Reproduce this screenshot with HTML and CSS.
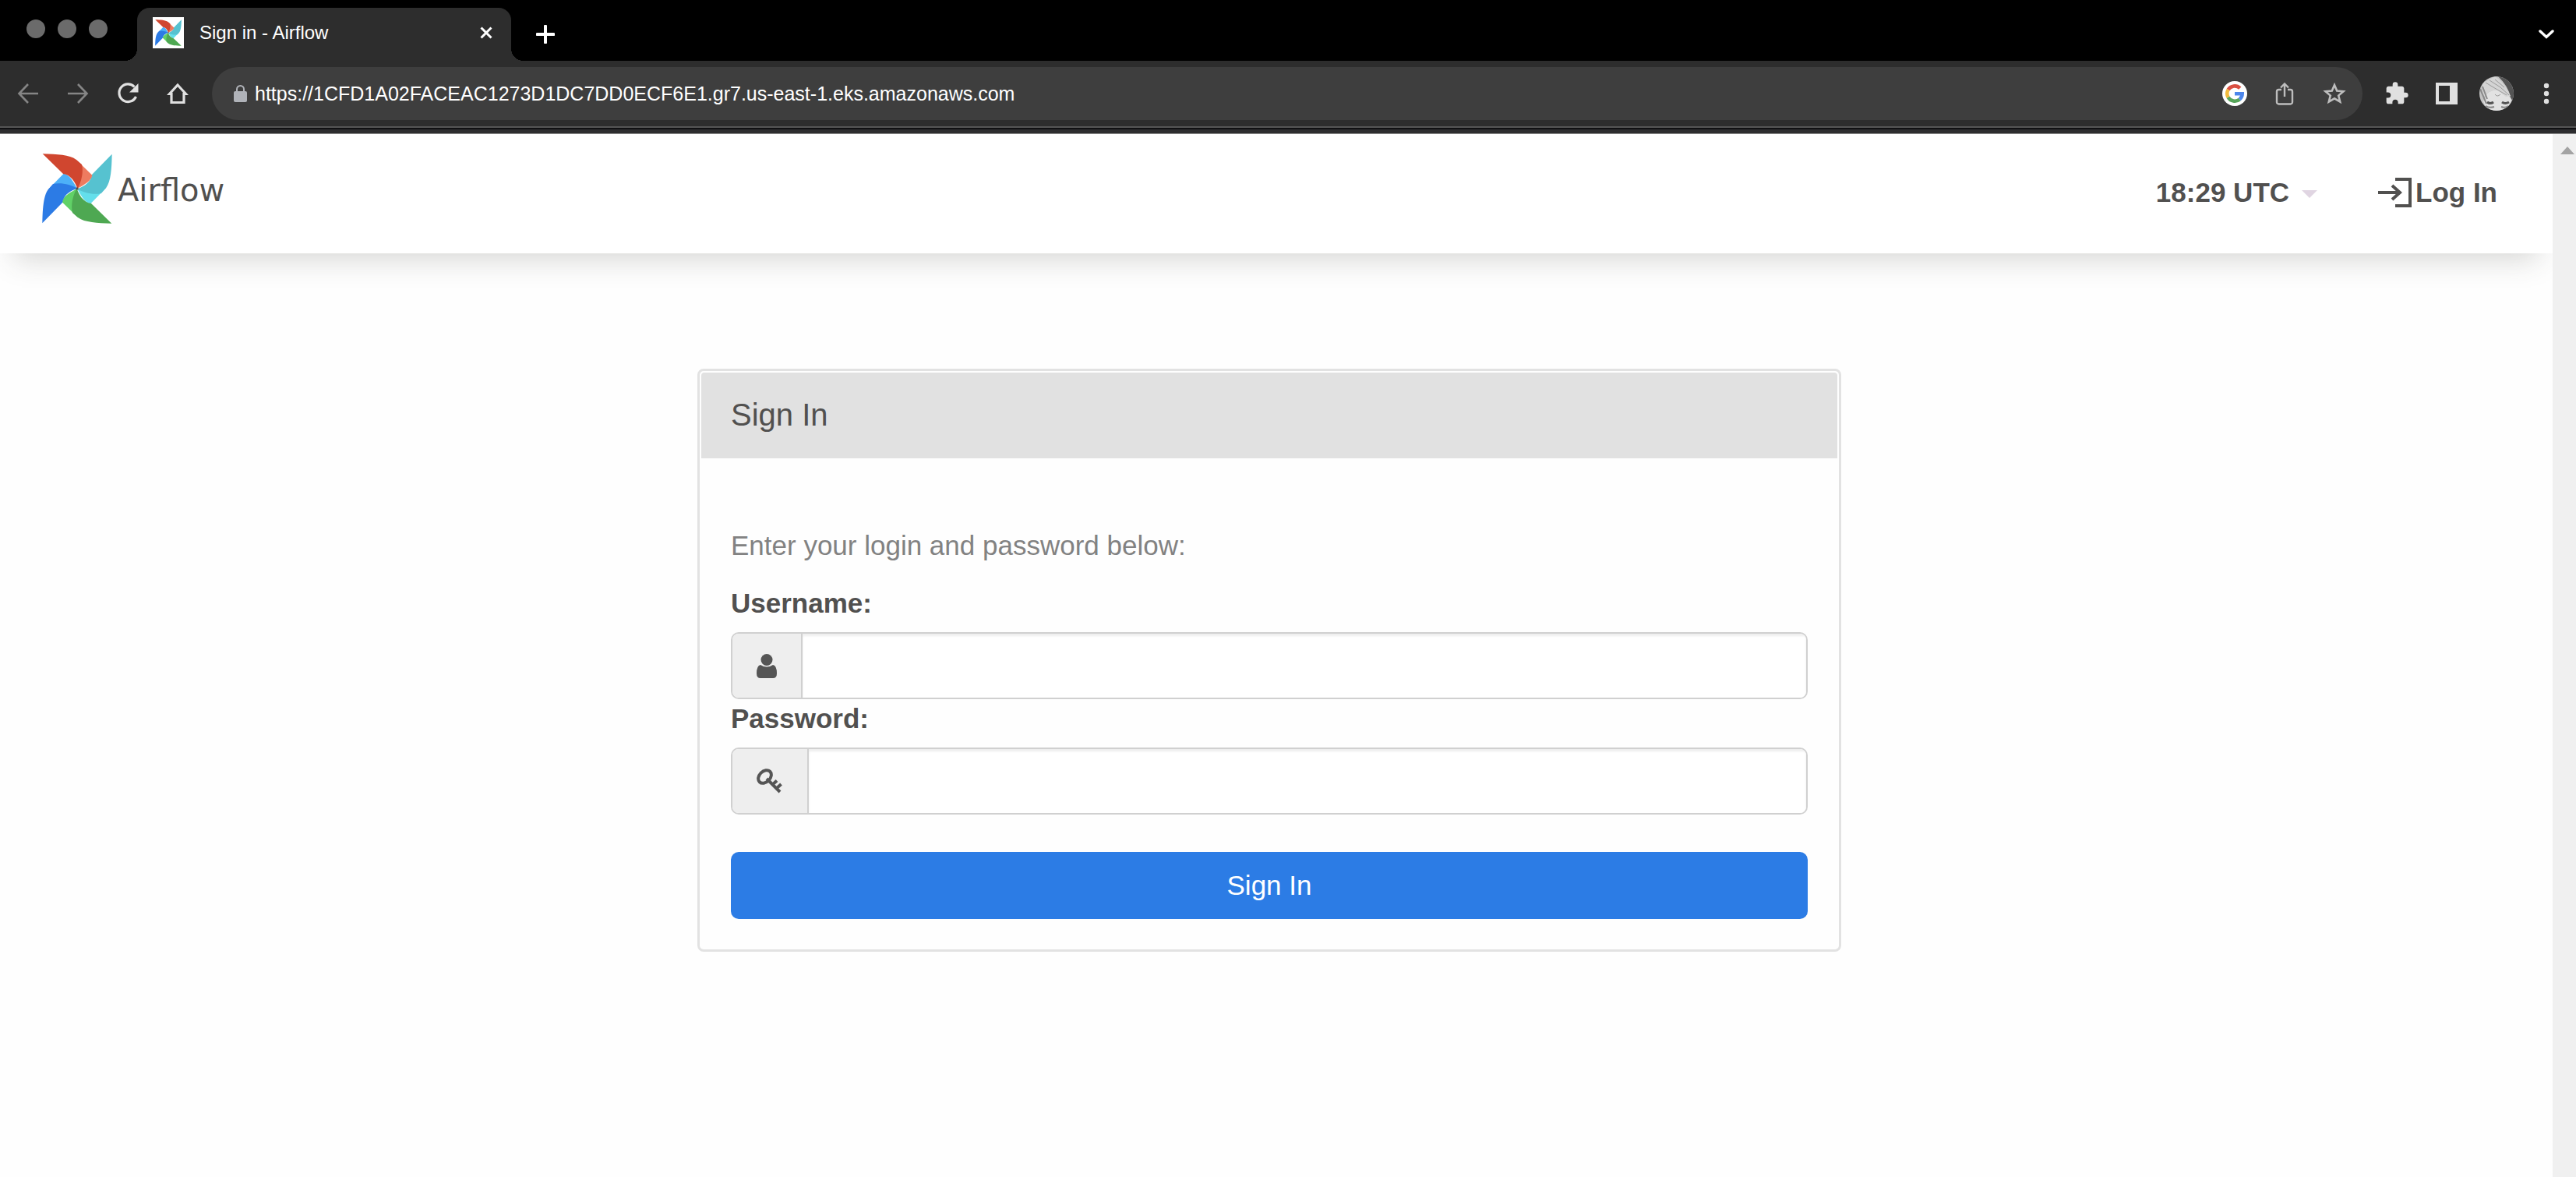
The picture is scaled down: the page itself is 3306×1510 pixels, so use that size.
FILE: index.html
```html
<!DOCTYPE html>
<html lang="en">
<head>
<meta charset="utf-8">
<title>Sign in - Airflow</title>
<link rel="stylesheet" href="styles.css">
</head>
<body>
<div class="browser">
  <div class="tabstrip">
    <div class="lights"><span class="light"></span><span class="light"></span><span class="light"></span></div>
    <div class="tab">
      <span class="favicon">
        <svg width="34" height="34" viewBox="162 110 270 270" aria-hidden="true"><use href="#pinwheel"/></svg>
      </span>
      <span class="tab-title">Sign in - Airflow</span>
      <button class="icon-btn tab-close" type="button" aria-label="Close tab">
        <svg width="16" height="16" viewBox="0 0 16 16"><path d="M1.500 1.500L14.500 14.500M14.500 1.500L1.500 14.500" fill="none" stroke="#fff" stroke-width="3"/></svg>
      </button>
    </div>
    <button class="icon-btn" type="button" aria-label="New tab">
      <svg width="24" height="24" viewBox="0 0 24 24"><path d="M12 1.500V22.500M1.500 12H22.500" fill="none" stroke="#fff" stroke-width="4" stroke-linecap="round"/></svg>
    </button>
    <button class="icon-btn tab-search" type="button" aria-label="Search tabs">
      <svg width="20" height="12" viewBox="0 0 20 12"><path d="M2 2L10 9.500L18 2" fill="none" stroke="#fff" stroke-width="3.400" stroke-linecap="round"/></svg>
    </button>
  </div>

  <div class="toolbar">
    <button class="icon-btn" type="button" aria-label="Back">
      <svg width="28" height="28" viewBox="0 0 28 28"><path d="M27 14H3M14 2L2.500 14L14 26" fill="none" stroke="#858585" stroke-width="2.600"/></svg>
    </button>
    <button class="icon-btn" type="button" aria-label="Forward">
      <svg width="28" height="28" viewBox="0 0 28 28"><path d="M1 14H25M14 2L25.500 14L14 26" fill="none" stroke="#858585" stroke-width="2.600"/></svg>
    </button>
    <button class="icon-btn" type="button" aria-label="Reload">
      <svg width="28" height="28" viewBox="0 0 28 28"><path d="M22.500 5.500A11.300 11.300 0 1 0 24.500 18" fill="none" stroke="#e0e0e0" stroke-width="3.200"/><path d="M27.500 1V12.500H16Z" fill="#e0e0e0"/></svg>
    </button>
    <button class="icon-btn" type="button" aria-label="Home">
      <svg width="28" height="28" viewBox="0 0 28 28"><path d="M14 3L3.500 14.500H6V25.500H22V14.500H24.500Z" fill="none" stroke="#e0e0e0" stroke-width="3.200"/></svg>
    </button>

    <div class="omnibox">
      <svg width="17" height="22" viewBox="0 0 17 22" aria-hidden="true"><rect y="8" width="17" height="14" rx="2" fill="#b0b3b9"/><path d="M4 9V5.500a4.500 4.500 0 0 1 9 0V9" fill="none" stroke="#b0b3b9" stroke-width="2"/></svg>
      <input class="url" type="text" aria-label="Address" value="https://1CFD1A02FACEAC1273D1DC7DD0ECF6E1.gr7.us-east-1.eks.amazonaws.com">
      <button class="icon-btn" type="button" aria-label="Search with Google">
        <svg width="32" height="32" viewBox="0 0 32 32"><circle cx="16" cy="16" r="16" fill="#fff"/><g fill="none" stroke-width="4.600"><path d="M22.800 9.200A9.700 9.700 0 0 0 7.600 11.200" stroke="#d94f42"/><path d="M7.600 11.200A9.700 9.700 0 0 0 7.600 20.900" stroke="#f2bb3c"/><path d="M7.600 20.900A9.700 9.700 0 0 0 22.300 23.400" stroke="#57a55a"/><path d="M22.300 23.400A9.700 9.700 0 0 0 25.700 16.200H16" stroke="#4c86ec"/></g></svg>
      </button>
      <button class="icon-btn" type="button" aria-label="Share">
        <svg width="24" height="30" viewBox="0 0 24 30"><path d="M8 10H4.500A2.500 2.500 0 0 0 2 12.500V26A2.500 2.500 0 0 0 4.500 28.500H19.500A2.500 2.500 0 0 0 22 26V12.500A2.500 2.500 0 0 0 19.500 10H16M12 19V3M7 7.500L12 2.500L17 7.500" fill="none" stroke="#bdbdbd" stroke-width="2.400"/></svg>
      </button>
      <button class="icon-btn" type="button" aria-label="Bookmark">
        <svg width="30" height="30" viewBox="0 0 30 30"><path d="M15 4L18.200 11.500L26.500 12.200L20.200 17.600L22.200 25.600L15 21.300L7.800 25.600L9.800 17.600L3.500 12.200L11.800 11.500Z" fill="none" stroke="#bdbdbd" stroke-width="2.600"/></svg>
      </button>
    </div>

    <button class="icon-btn" type="button" aria-label="Extensions">
      <svg width="32" height="32" viewBox="0 0 24 24"><path d="M20.500 11H19V7c0-1.100-.9-2-2-2h-4V3.500a2.500 2.500 0 0 0-5 0V5H4c-1.100 0-2 .9-2 2v3.800h1.500a2.700 2.700 0 0 1 0 5.400H2V20c0 1.100.9 2 2 2h3.800v-1.500a2.700 2.700 0 0 1 5.400 0V22H17c1.100 0 2-.9 2-2v-4h1.500a2.500 2.500 0 0 0 0-5z" fill="#e0e0e0"/></svg>
    </button>
    <button class="icon-btn" type="button" aria-label="Side panel">
      <svg width="28" height="28" viewBox="0 0 28 28"><path d="M0 0H28V28H0ZM4 4V24H18V4Z" fill="#e0e0e0" fill-rule="evenodd"/></svg>
    </button>
    <button class="icon-btn profile" type="button" aria-label="Profile">
      <svg width="44" height="44" viewBox="0 0 44 44">
        <defs><clipPath id="round"><circle cx="22" cy="22" r="22"/></clipPath></defs>
        <g clip-path="url(#round)">
          <rect width="44" height="44" fill="#c4c4c4"/>
          <path d="M24 0H44V34L40 27Q37 12 24 0Z" fill="#555"/>
          <path d="M10 22Q20 13 36 22L41 30L37 44H10L5 32Z" fill="#e2e2e2"/>
          <path d="M4 9L20 0Q33 8 40 25L34 26L22 17L12 20L4 28Z" fill="#d4d4d4"/>
          <path d="M8 8L23 17L35 24M13 5L27 14L38 24M20 4L32 14" fill="none" stroke="#9a9a9a"/>
          <path d="M1 16L9 35M4 13L10 29" stroke="#8a8a8a" fill="none" stroke-width="2"/>
          <path d="M10 33Q14 36 18 33M29 33Q33 36 38 33" fill="none" stroke="#555" stroke-width="3"/>
          <path d="M8 38Q13 41 19 39M28 39Q33 41 37 38" fill="none" stroke="#888" stroke-width="2"/>
          <path d="M20 23Q23 27 27 23" fill="none" stroke="#999"/>
        </g>
      </svg>
    </button>
    <button class="icon-btn" type="button" aria-label="Menu">
      <svg width="8" height="28" viewBox="0 0 8 28"><g fill="#e0e0e0"><circle cx="4" cy="4" r="3.200"/><circle cx="4" cy="14" r="3.200"/><circle cx="4" cy="24" r="3.200"/></g></svg>
    </button>
  </div>
  <div class="frame-edge"></div>
</div>

<div class="viewport">
  <div class="page">
    <header class="navbar">
      <a class="brand" href="#">
        <svg width="90" height="90" viewBox="162 110 270 270" aria-hidden="true">
          <defs>
            <path id="blade" d="M164 111C220 112 268 115 293 133L315 152C322 180 314 220 298 245C288 215 270 192 243 188Z"/>
            <path id="fold" d="M293 133L355 193C352 215 325 230 297 245C300 215 310 180 293 133Z"/>
            <g id="pinwheel">
              <g transform="rotate(90 297 245)"><use href="#fold" fill="#64dfeb"/><use href="#blade" fill="#56c2d0"/></g>
              <g transform="rotate(180 297 245)"><use href="#fold" fill="#61d167"/><use href="#blade" fill="#4ea852"/></g>
              <g transform="rotate(270 297 245)"><use href="#fold" fill="#4db0f8"/><use href="#blade" fill="#2c7be5"/></g>
              <use href="#fold" fill="#ee7b60"/><use href="#blade" fill="#d0462f"/>
              <circle cx="297" cy="245" r="5" fill="#51504f"/>
            </g>
          </defs>
          <use href="#pinwheel"/>
        </svg>
        <span class="brand-name">Airflow</span>
      </a>
      <nav class="nav-links">
        <button class="nav-link" type="button">18:29 UTC
          <svg class="caret" width="20" height="10" viewBox="0 0 20 10" aria-hidden="true"><path d="M0 0H20L10 10Z" fill="#e0d5e2"/></svg>
        </button>
        <a class="nav-link login" href="#">
          <svg width="44" height="40" viewBox="0 0 44 40" aria-hidden="true"><path d="M22 3H41V37H22M0 20H28M18 11L28 20L18 29" fill="none" stroke="#51504f" stroke-width="4"/></svg>
          Log In
        </a>
      </nav>
    </header>

    <main class="content">
      <section class="panel">
        <h1 class="panel-heading">Sign In</h1>
        <form class="panel-body">
          <p class="help">Enter your login and password below:</p>
          <label class="field-label" for="username">Username:</label>
          <div class="input-group">
            <span class="addon">
              <svg width="26" height="31" viewBox="0 0 26 31" aria-hidden="true"><circle cx="13" cy="7.500" r="7.500" fill="#555"/><path d="M5 14Q13 19 21 14Q26 15 26 25Q26 31 21 31H5Q0 31 0 25Q0 15 5 14Z" fill="#555"/></svg>
            </span>
            <input class="text-input" id="username" type="text">
          </div>
          <label class="field-label" for="password">Password:</label>
          <div class="input-group">
            <span class="addon">
              <svg width="34" height="32" viewBox="0 0 34 32" aria-hidden="true"><ellipse cx="10.500" cy="10.500" rx="9.500" ry="7" transform="rotate(-45 10.500 10.500)" fill="none" stroke="#555" stroke-width="4"/><path d="M13 13L30 30M20.500 20.500L26 15.500M25.500 25.500L31.500 20" fill="none" stroke="#555" stroke-width="4"/></svg>
            </span>
            <input class="text-input" id="password" type="password">
          </div>
          <button class="submit" type="submit">Sign In</button>
        </form>
      </section>
    </main>
  </div>
  <div class="scrollbar">
    <svg width="18" height="10" viewBox="0 0 18 10" aria-hidden="true"><path d="M9 0L18 10H0Z" fill="#a3a3a3"/></svg>
  </div>
</div>
</body>
</html>
```
FILE: styles.css
```css
* {
  box-sizing: border-box;
}

body {
  margin: 0;
  min-height: 100vh;
  display: flex;
  flex-direction: column;
  background: #fefefe;
  color: #51504f;
  font-family: "Liberation Sans", Arial, sans-serif;
  font-size: 35px;
  line-height: 50px;
}

button,
input {
  font: inherit;
  color: inherit;
}

/* Browser window */
.tabstrip {
  display: flex;
  align-items: center;
  height: 78px;
  padding: 10px 22px 0 34px;
  background: #000;
}

.lights {
  display: flex;
  gap: 16px;
  margin: 0 38px 14px 0;
}

.light {
  width: 24px;
  height: 24px;
  border-radius: 50%;
  background: #6b6b6b;
}

.tab {
  position: relative;
  display: flex;
  align-items: center;
  align-self: stretch;
  width: 480px;
  margin-right: 28px;
  padding: 0 16px 4px 20px;
  border-radius: 16px 16px 0 0;
  background: #2d2d2d;
}

.tab::before,
.tab::after {
  content: "";
  position: absolute;
  bottom: 0;
  width: 16px;
  height: 16px;
}

.tab::before {
  right: 100%;
  background: radial-gradient(circle at 0 0, #000 16px, #2d2d2d 16px);
}

.tab::after {
  left: 100%;
  background: radial-gradient(circle at 100% 0, #000 16px, #2d2d2d 16px);
}

.favicon {
  display: flex;
  align-items: center;
  justify-content: center;
  width: 40px;
  height: 40px;
  margin-right: 20px;
  background: #fff;
}

.tab-title {
  flex: 1;
  color: #fff;
  font-size: 24px;
  line-height: 32px;
}

.icon-btn {
  display: flex;
  flex: none;
  align-items: center;
  justify-content: center;
  width: 32px;
  height: 32px;
  padding: 0;
  border: 0;
  background: none;
}

.tab-search {
  margin-left: auto;
}

.toolbar {
  display: flex;
  align-items: center;
  gap: 32px;
  height: 84px;
  padding: 0 22px 0 20px;
  background: #2d2d2d;
}

.omnibox {
  display: flex;
  flex: 1;
  align-items: center;
  gap: 32px;
  height: 68px;
  margin: 0 -4px;
  padding: 0 20px 0 28px;
  border-radius: 34px;
  background: #3e3e3e;
}

.url {
  flex: 1;
  min-width: 0;
  margin-left: -22px;
  padding: 0;
  border: 0;
  background: none;
  color: #fff;
  font-size: 25px;
  line-height: 32px;
}

.profile {
  width: 44px;
  height: 44px;
  margin: 0 -6px;
}

.frame-edge {
  height: 10px;
  border-top: 2px solid #555;
  border-bottom: 1px solid #8a8a8a;
  background: linear-gradient(#101012 2px, #2d2d2f 2px);
}

/* Page */
.viewport {
  display: flex;
  flex: 1;
}

.page {
  flex: 1;
  overflow: hidden;
}

.scrollbar {
  display: flex;
  justify-content: flex-end;
  align-items: flex-start;
  width: 30px;
  padding: 16px 2px;
  background: #f0f0f0;
}

.navbar {
  display: flex;
  align-items: center;
  justify-content: space-between;
  height: 153px;
  padding: 0 71px 0 54px;
  background: #fff;
  box-shadow: 0 24px 36px -18px rgba(60, 60, 50, 0.22);
}

.brand {
  display: flex;
  align-items: center;
  gap: 7px;
  margin-bottom: 13px;
  color: inherit;
  text-decoration: none;
}

.brand-name {
  padding-top: 3px;
  font-family: "DejaVu Sans", sans-serif;
  font-size: 40px;
}

.nav-links {
  display: flex;
  align-items: center;
  gap: 78px;
  margin-bottom: 3px;
}

.nav-link {
  display: flex;
  align-items: center;
  gap: 16px;
  padding: 0;
  border: 0;
  background: none;
  color: inherit;
  font-weight: bold;
  text-decoration: none;
}

.caret {
  margin-top: 4px;
}

.login {
  gap: 4px;
}

.content {
  padding: 148px 18px 148px 0;
}

.panel {
  max-width: 1468px;
  margin: 0 auto;
  padding: 2px;
  border: 3px solid #e2e2e2;
  border-radius: 8px;
}

.panel-heading {
  margin: 0;
  padding: 29px 38px 31px;
  border-radius: 4px 4px 0 0;
  background: #e1e1e1;
  font-size: 40px;
  font-weight: normal;
}

.panel-body {
  padding: 87px 38px 37px;
}

.help {
  margin: 0 0 24px;
  color: #828282;
}

.field-label {
  display: block;
  margin-bottom: 12px;
  font-weight: bold;
}

.input-group {
  display: flex;
  height: 86px;
  border: 2px solid #d0d0d0;
  border-radius: 10px;
  overflow: hidden;
}

.addon {
  display: flex;
  align-items: center;
  padding: 0 31px;
  border-right: 2px solid #d0d0d0;
  background: #eee;
}

.text-input {
  flex: 1;
  min-width: 0;
  padding: 0 30px;
  border: 0;
  background: #fff;
  box-shadow: inset 0 3px 3px rgba(0, 0, 0, 0.07);
}

.submit {
  width: 100%;
  height: 86px;
  margin-top: 48px;
  border: 0;
  border-radius: 10px;
  background: #2c7ce5;
  color: #fff;
}
```
